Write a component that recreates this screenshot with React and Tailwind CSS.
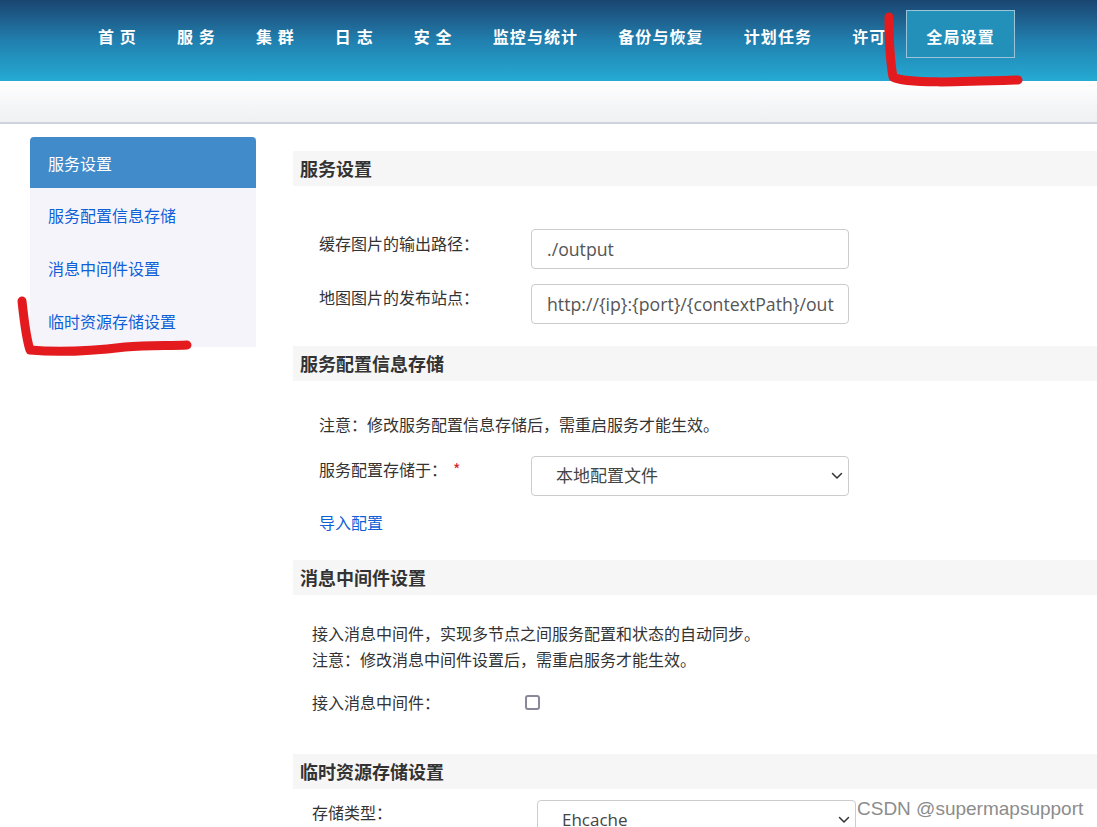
import React from 'react';

const navItems = ['首 页', '服 务', '集 群', '日 志', '安 全', '监控与统计', '备份与恢复', '计划任务', '许可'];

const sideItems = ['服务配置信息存储', '消息中间件设置', '临时资源存储设置'];

const Chevron = () => (
    <svg width="12" height="8" viewBox="0 0 12 8" fill="none">
        <path d="M1.5 1.5 L6 6 L10.5 1.5" stroke="#333" strokeWidth="1.5" strokeLinecap="round" strokeLinejoin="round" />
    </svg>
);

const SectionTitle = ({ children }) => (
    <div className="h-[35px] bg-[#f6f6f6] flex items-center pl-[7px] text-[18px] font-bold text-[#333]">
        {children}
    </div>
);

const TextInput = ({ value }) => (
    <input
        readOnly
        value={value}
        className="w-[318px] h-[40px] border border-[#cccccc] rounded-[4px] pl-[15px] pr-[14px] text-[17.7px] text-[#555] font-['Open_Sans'] bg-white outline-none"
    />
);

const FakeSelect = ({ value, className }) => (
    <div className={`h-[40px] border border-[#cccccc] rounded-[4px] bg-white flex items-center justify-between pl-[24px] pr-[5px] ${className}`}>
        <span className="text-[17px] text-[#444] font-['Open_Sans','Noto_Sans_CJK_SC',sans-serif]">{value}</span>
        <Chevron />
    </div>
);

export default function App() {
    return (
        <div className="relative h-[827px] overflow-hidden bg-white text-[#333] font-['Noto_Sans_CJK_SC','Noto_Sans',sans-serif]">
            {/* Top nav */}
            <div className="h-[81px] bg-linear-to-b from-[#1a4571] via-[#217fae] to-[#24abd3] pl-[78px] pt-[10px]">
                <div className="flex">
                    {navItems.map((item) => (
                        <div key={item} className="h-[48px] px-5 pt-[3px] flex items-center text-white text-[16px] font-bold tracking-[1.1px] whitespace-pre">
                            {item}
                        </div>
                    ))}
                    <div className="h-[48px] px-[19px] pt-[3px] flex items-center text-white text-[16px] font-bold tracking-[1.1px] border border-[#9cc4d9] bg-[#2390ba]">
                        全局设置
                    </div>
                </div>
            </div>

            {/* Sub bar */}
            <div className="h-[43px] bg-linear-to-b from-white to-[#eff0f3] border-b-2 border-[#cfd3dc]" />

            <div className="flex">
                {/* Sidebar */}
                <div className="w-[226px] ml-[30px] mt-[13px] shrink-0">
                    <div className="h-[51px] bg-[#428bca] rounded-t-[4px] flex items-center pl-[18px] text-white text-[16px]">
                        服务设置
                    </div>
                    {sideItems.map((item) => (
                        <div key={item} className="h-[53px] bg-[#f5f4fa] flex items-center pl-[18px] text-[#0f5fd8] text-[16px]">
                            {item}
                        </div>
                    ))}
                </div>

                {/* Main */}
                <div className="flex-1 ml-[37px] mt-[27px]">
                    <SectionTitle>服务设置</SectionTitle>
                    <div className="pl-[26px] pt-[43px] flex flex-col gap-[15px]">
                        <div className="flex items-start">
                            <div className="w-[212px] pt-[2px] leading-[24px] text-[16px]">缓存图片的输出路径：</div>
                            <TextInput value="./output" />
                        </div>
                        <div className="flex items-start">
                            <div className="w-[212px] pt-[1px] leading-[24px] text-[16px]">地图图片的发布站点：</div>
                            <TextInput value="http://{ip}:{port}/{contextPath}/output" />
                        </div>
                    </div>

                    <div className="mt-[22px]">
                        <SectionTitle>服务配置信息存储</SectionTitle>
                    </div>
                    <div className="pl-[26px] pt-[31px]">
                        <div className="leading-[24px] text-[16px]">注意：修改服务配置信息存储后，需重启服务才能生效。</div>
                        <div className="flex items-start mt-[20px]">
                            <div className="w-[212px] leading-[24px] text-[16px] pt-[1px]">
                                服务配置存储于：
                                <span className="text-[#e02020] ml-[6px]">*</span>
                            </div>
                            <FakeSelect value="本地配置文件" className="w-[318px]" />
                        </div>
                        <div className="mt-[14px] leading-[24px] text-[16px] text-[#0f5fd8]">导入配置</div>
                    </div>

                    <div className="mt-[26px]">
                        <SectionTitle>消息中间件设置</SectionTitle>
                    </div>
                    <div className="pl-[19px] pt-[25px]">
                        <div className="leading-[26px] text-[16px]">
                            <div>接入消息中间件，实现多节点之间服务配置和状态的自动同步。</div>
                            <div>注意：修改消息中间件设置后，需重启服务才能生效。</div>
                        </div>
                        <div className="flex items-center mt-[18px] h-[24px]">
                            <div className="w-[213px] leading-[24px] text-[16px]">接入消息中间件：</div>
                            <div className="w-[15px] h-[15px] border-2 border-[#8a8898] rounded-[3px] bg-white mt-[1px]" />
                        </div>
                    </div>

                    <div className="mt-[40px]">
                        <SectionTitle>临时资源存储设置</SectionTitle>
                    </div>
                    <div className="pl-[19px] pt-[11px] flex items-start">
                        <div className="w-[225px] leading-[24px] text-[16px]">存储类型：</div>
                        <FakeSelect value="Ehcache" className="w-[319px]" />
                    </div>
                </div>
            </div>

            {/* Watermark */}
            <div className="absolute left-[857px] top-[795px] text-[19px] text-[#8c8c8c] font-['Liberation_Sans',sans-serif]">
                CSDN @supermapsupport
            </div>

            {/* Red hand-drawn annotations */}
            <svg className="absolute inset-0 pointer-events-none" width="1097" height="827">
                <path
                    d="M889 17 C889 40, 890 60, 893 77 C905 84, 960 82, 1018 80"
                    stroke="#e31b1e"
                    strokeWidth="9"
                    fill="none"
                    strokeLinecap="round"
                    strokeLinejoin="round"
                />
                <path
                    d="M22 301 C24 320, 26 338, 30 350 C60 353, 100 350, 125 347 C150 345, 170 346, 187 345"
                    stroke="#e31b1e"
                    strokeWidth="9"
                    fill="none"
                    strokeLinecap="round"
                    strokeLinejoin="round"
                />
            </svg>
        </div>
    );
}
